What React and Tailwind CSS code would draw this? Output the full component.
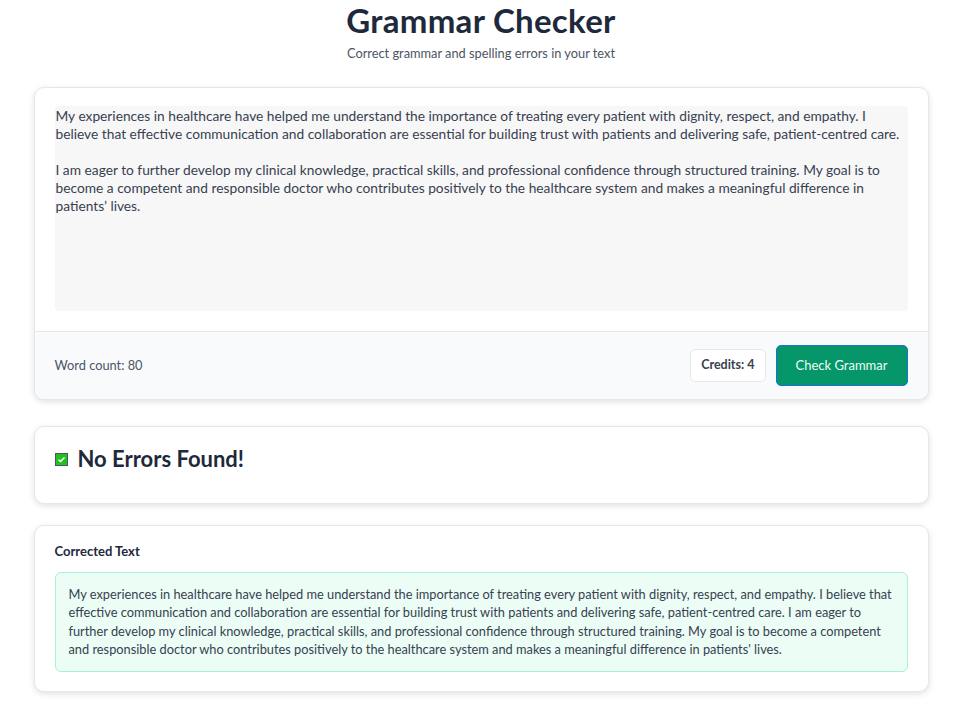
import { useState } from 'react'

const essay =
  'My experiences in healthcare have helped me understand the importance of treating every patient with dignity, respect, and empathy. I believe that effective communication and collaboration are essential for building trust with patients and delivering safe, patient-centred care.\n\nI am eager to further develop my clinical knowledge, practical skills, and professional confidence through structured training. My goal is to become a competent and responsible doctor who contributes positively to the healthcare system and makes a meaningful difference in patients\u2019 lives.'

const corrected =
  "My experiences in healthcare have helped me understand the importance of treating every patient with dignity, respect, and empathy. I believe that effective communication and collaboration are essential for building trust with patients and delivering safe, patient-centred care. I am eager to further develop my clinical knowledge, practical skills, and professional confidence through structured training. My goal is to become a competent and responsible doctor who contributes positively to the healthcare system and makes a meaningful difference in patients' lives."

function CheckBox() {
  return (
    <svg width="13" height="13" viewBox="0 0 13 13" className="shrink-0">
      <rect x="0.5" y="0.5" width="12" height="12" fill="#22c11f" stroke="#4b5563" />
      <path d="M3.5 6.8 L5.5 8.6 L9.5 4.4" fill="none" stroke="#fff" strokeWidth="1.4" />
    </svg>
  )
}

export default function App() {
  const [text, setText] = useState(essay)
  const words = 80

  return (
    <div className="min-h-screen bg-white text-[#1e293b]" style={{ fontFamily: 'Lato, "Noto Sans", sans-serif' }}>
      <div className="mx-auto w-[895px] pb-8">
        {/* Header */}
        <div className="text-center">
          <h1 className="text-[33px] leading-[40px] font-bold tracking-[0.3px] text-[#1e293b]">Grammar Checker</h1>
          <p className="mt-[4px] text-[12.8px] leading-[18px] text-[#4b5563]">Correct grammar and spelling errors in your text</p>
        </div>

        {/* Input card */}
        <div className="mt-[25px] rounded-[10px] border border-[#e5e7eb] bg-white shadow-[0_2px_6px_rgba(0,0,0,0.12)] overflow-hidden">
          <div className="px-5 pt-[18px] pb-5">
            <textarea
              value={text}
              onChange={e => setText(e.target.value)}
              className="block w-full h-[205px] resize-none rounded-[4px] bg-[#f7f7f7] px-[1px] py-[1px] text-[13.75px] leading-[18px] text-[#374151] outline-none"
            />
          </div>
          <div className="flex items-center justify-between border-t border-[#e5e7eb] bg-[#f8fafc] px-5 py-[13px]">
            <span className="text-[12.8px] text-[#4b5563]">Word count: {words}</span>
            <div className="flex items-center gap-[10px]">
              <span className="rounded-[5px] border border-[#e5e7eb] bg-white px-[10px] py-[6px] text-[12.5px] font-bold text-[#374151]">Credits: 4</span>
              <button className="h-[41px] w-[132px] rounded-[5px] border border-[#1d6fd8] bg-[#05966a] text-[13px] text-[#ecfdf5]">Check Grammar</button>
            </div>
          </div>
        </div>

        {/* Result */}
        <div className="mt-[26px] flex h-[78px] items-start gap-[10px] rounded-[10px] border border-[#e5e7eb] bg-white px-5 pt-[19px] shadow-[0_2px_6px_rgba(0,0,0,0.12)]">
          <div className="mt-[7px]"><CheckBox /></div>
          <h2 className="text-[22px] leading-[26px] font-bold text-[#1e293b]">No Errors Found!</h2>
        </div>

        {/* Corrected text */}
        <div className="mt-[21px] rounded-[10px] border border-[#e5e7eb] bg-white px-5 pt-[16px] pb-[19px] shadow-[0_2px_6px_rgba(0,0,0,0.12)]">
          <h3 className="text-[13px] font-bold text-[#1e293b]">Corrected Text</h3>
          <div className="mt-[10px] rounded-[6px] border border-[#a7f3d0] bg-[#ecfdf5] px-[13px] py-[12px] text-[12.8px] leading-[18.5px] text-[#374151]">
            {corrected}
          </div>
        </div>
      </div>
    </div>
  )
}
